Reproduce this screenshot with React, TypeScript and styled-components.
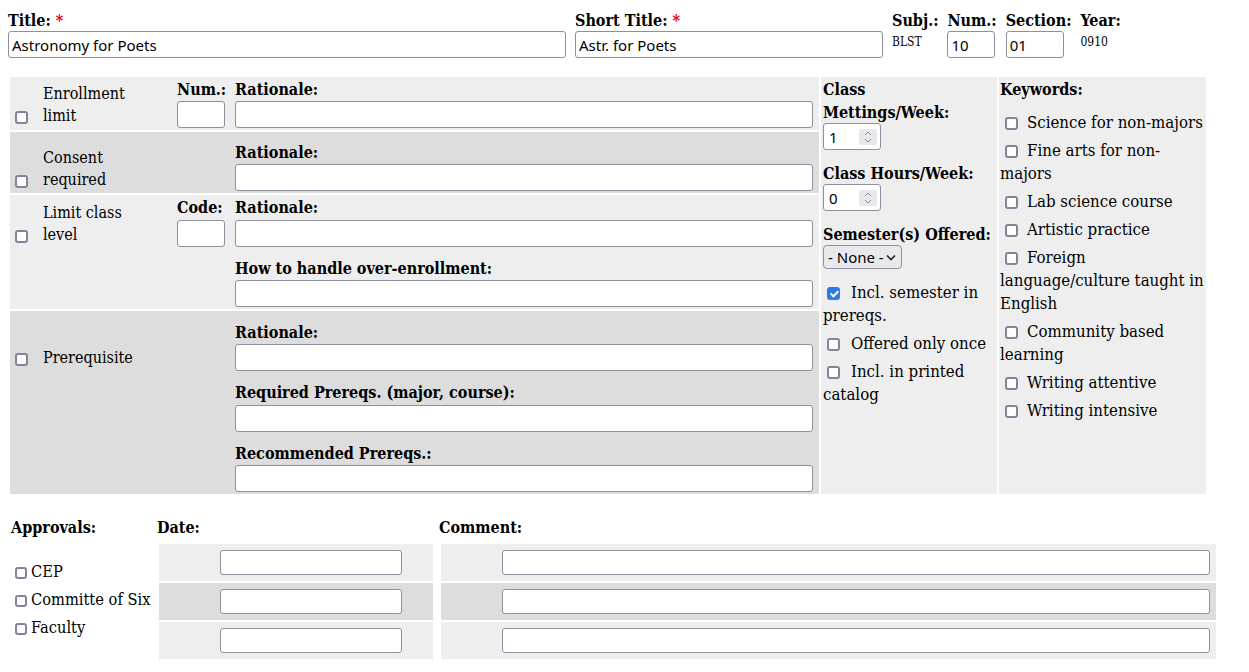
import React from "react";
import styled, { createGlobalStyle } from "styled-components";

const Global = createGlobalStyle`
  html, body { background: #fff; }
  body {
    margin: 8px;
    font-family: "DejaVu Serif Condensed", "DejaVu Serif", serif;
    font-stretch: condensed;
    font-size: 16px;
    line-height: 23px;
    color: #000;
  }
  * { box-sizing: border-box; }
`;

/* ---------- shared controls ---------- */

const Check = styled.input.attrs({ type: "checkbox" })<{ $ml?: number; $mr?: number; $size?: number }>`
  appearance: none;
  -webkit-appearance: none;
  flex: none;
  width: ${(p) => p.$size ?? 13}px;
  height: ${(p) => p.$size ?? 13}px;
  margin: 0 ${(p) => p.$mr ?? 3}px 0 ${(p) => p.$ml ?? 4}px;
  border: 2px solid #85839a;
  border-radius: 3px;
  background: #fff;
  vertical-align: -2px;
  position: relative;
  &:checked {
    background: #2f7be6;
    border-color: #2f7be6;
  }
  &:checked::after {
    content: "";
    position: absolute;
    left: 2.5px;
    top: 0px;
    width: 3px;
    height: 6px;
    border: solid #fff;
    border-width: 0 2px 2px 0;
    transform: rotate(45deg);
  }
`;

const TextInput = styled.input.attrs({ type: "text" })<{ $w?: number; $h?: number }>`
  display: block;
  width: ${(p) => (p.$w ? `${p.$w}px` : "calc(100% - 6px)")};
  height: ${(p) => p.$h ?? 27}px;
  margin: 0;
  padding: 0 3px;
  border: 1px solid #8f8f9d;
  border-radius: 3px;
  background: #fff;
  font: 15px "Noto Sans", sans-serif;
  font-stretch: normal;
  color: #000;
  outline: none;
`;

const BoldLabel = styled.div`
  font-weight: bold;
  line-height: 23px;
  padding-top: 1px;
  margin-bottom: -1px;
  white-space: nowrap;
`;

const Req = styled.span`
  color: #e60000;
`;

/* ---------- top bar ---------- */

const TopBar = styled.div`
  display: flex;
  gap: 9px;
  align-items: flex-start;
`;

const TopField = styled.div`
  display: flex;
  flex-direction: column;
`;

const SmallValue = styled.div`
  margin-top: 4px;
  font-size: 12px;
  line-height: 14px;
`;

/* ---------- main grid ---------- */

const Main = styled.div`
  display: flex;
  gap: 2px;
  margin: 19px 0 0 2px;
  width: 1196px;
`;

const LeftBlock = styled.div`
  width: 809px;
  display: flex;
  flex-direction: column;
  gap: 2px;
`;

const FieldRow = styled.div<{ $h: number; $dark?: boolean }>`
  display: grid;
  grid-template-columns: 167px 1fr;
  height: ${(p) => p.$h}px;
  background: ${(p) => (p.$dark ? "#dddddd" : "#eeeeee")};
`;

const LabelCell = styled.div<{ $pt: number }>`
  align-self: start;
  display: flex;
  align-items: flex-end;
  padding: ${(p) => p.$pt}px 0 0 5px;
  & > input {
    margin: 0 15px 3px 0;
  }
`;

const RowLabel = styled.span`
  width: 100px;
  font-size: 16px;
  line-height: 22px;
`;

const Fields = styled.div`
  align-self: end;
  display: flex;
  flex-direction: column;
  gap: 11px;
  padding-bottom: 2px;
`;

const FieldGroup = styled.div`
  display: grid;
  grid-template-columns: 58px 1fr;
`;

const FieldBox = styled.div<{ $col: number }>`
  grid-column: ${(p) => p.$col};
  display: flex;
  flex-direction: column;
`;

const FieldLabel = styled.div`
  font-weight: bold;
  line-height: 22.5px;
  white-space: nowrap;
`;

const SideCol = styled.div<{ $w: number; $px: number }>`
  width: ${(p) => p.$w}px;
  background: #eeeeee;
  padding: 0 ${(p) => p.$px}px;
  display: flex;
  flex-direction: column;
  align-items: flex-start;
`;

const ColHeading = styled.div<{ $mt?: number }>`
  font-weight: bold;
  line-height: 23px;
  margin-top: ${(p) => p.$mt ?? 0}px;
  padding-top: 1px;
  margin-bottom: -1px;
`;

const NumBox = styled.div`
  display: flex;
  align-items: center;
  width: 58px;
  height: 27px;
  border: 1px solid #8f8f9d;
  border-radius: 3px;
  background: #fff;
  padding: 0 3px 0 5px;
`;

const NumField = styled.input.attrs({ type: "number" })`
  flex: 1;
  min-width: 0;
  border: none;
  outline: none;
  background: transparent;
  padding: 0;
  margin: 0;
  font: 15px "Noto Sans", sans-serif;
  font-stretch: normal;
  color: #000;
  -moz-appearance: textfield;
  &::-webkit-inner-spin-button,
  &::-webkit-outer-spin-button {
    -webkit-appearance: none;
    margin: 0;
  }
`;

const Spinner = styled.span`
  flex: none;
  display: flex;
  width: 18px;
  height: 16px;
  background: #e9e9ed;
  border-radius: 2px;
`;

const SelectBox = styled.div`
  display: flex;
  align-items: center;
  width: 79px;
  height: 24px;
  border: 1px solid #8f8f9d;
  border-radius: 4px;
  background: #e9e9ed;
  padding: 0 5px 0 4px;
`;

const Select = styled.select`
  appearance: none;
  -webkit-appearance: none;
  flex: 1;
  min-width: 0;
  border: none;
  outline: none;
  background: transparent;
  padding: 0;
  margin: 0;
  font: 15px "Noto Sans", sans-serif;
  font-stretch: normal;
  color: #000;
`;

const OptItem = styled.div<{ $mt: number }>`
  margin-top: ${(p) => p.$mt}px;
  font-size: 16.7px;
  line-height: 23px;
  padding-top: 1px;
  margin-bottom: -1px;
`;

/* ---------- approvals ---------- */

const Approvals = styled.div`
  display: grid;
  grid-template-columns: 146px 282px 780px;
  grid-template-rows: 23px auto;
  row-gap: 6px;
  margin: 21px 0 0 2px;
`;

const HeadCell = styled.div`
  padding-left: 1px;
  font-weight: bold;
  line-height: 23px;
  padding-top: 1px;
`;

const ApprovalList = styled.div`
  padding: 16px 0 0 1px;
  display: flex;
  flex-direction: column;
  gap: 5px;
`;

const ApprovalItem = styled.div`
  font-size: 16.3px;
  line-height: 23px;
  white-space: nowrap;
`;

const Stack = styled.div<{ $pl: number; $pr: number }>`
  display: flex;
  flex-direction: column;
  gap: 2px;
  padding: 0 ${(p) => p.$pr}px 0 ${(p) => p.$pl}px;
`;

const StackCell = styled.div<{ $dark?: boolean }>`
  height: 37px;
  display: flex;
  align-items: center;
  padding-left: 61px;
  background: ${(p) => (p.$dark ? "#dddddd" : "#eeeeee")};
`;

/* ---------- icons ---------- */

const SpinIcon = () => (
  <svg width="18" height="16" viewBox="0 0 18 16">
    <polyline points="6,6 9,3 12,6" fill="none" stroke="#8a8a95" strokeWidth="1" />
    <polyline points="6,10 9,13 12,10" fill="none" stroke="#8a8a95" strokeWidth="1" />
  </svg>
);

const ChevronDown = () => (
  <svg width="10" height="7" viewBox="0 0 10 7">
    <polyline points="1,1.5 5,5.5 9,1.5" fill="none" stroke="#222" strokeWidth="1.6" />
  </svg>
);

/* ---------- data ---------- */

type Row = {
  label: string;
  h: number;
  dark?: boolean;
  pt: number;
  small?: string;
  fields: string[];
};

const rows: Row[] = [
  { label: "Enrollment limit", h: 53, pt: 6, small: "Num.:", fields: ["Rationale:"] },
  { label: "Consent required", h: 61, dark: true, pt: 15, fields: ["Rationale:"] },
  {
    label: "Limit class level",
    h: 114,
    pt: 7,
    small: "Code:",
    fields: ["Rationale:", "How to handle over-enrollment:"],
  },
  {
    label: "Prerequisite",
    h: 183,
    dark: true,
    pt: 36,
    fields: ["Rationale:", "Required Prereqs. (major, course):", "Recommended Prereqs.:"],
  },
];

const keywords = [
  "Science for non-majors",
  "Fine arts for non-majors",
  "Lab science course",
  "Artistic practice",
  "Foreign language/culture taught in English",
  "Community based learning",
  "Writing attentive",
  "Writing intensive",
];

const approvals = ["CEP", "Committe of Six", "Faculty"];

export default function App() {
  return (
    <>
      <Global />
      <TopBar>
        <TopField>
          <BoldLabel>
            Title: <Req>*</Req>
          </BoldLabel>
          <TextInput $w={558} defaultValue="Astronomy for Poets" />
        </TopField>
        <TopField>
          <BoldLabel>
            Short Title: <Req>*</Req>
          </BoldLabel>
          <TextInput $w={308} defaultValue="Astr. for Poets" />
        </TopField>
        <TopField>
          <BoldLabel>Subj.:</BoldLabel>
          <SmallValue>BLST</SmallValue>
        </TopField>
        <TopField>
          <BoldLabel>Num.:</BoldLabel>
          <TextInput $w={48} defaultValue="10" />
        </TopField>
        <TopField>
          <BoldLabel>Section:</BoldLabel>
          <TextInput $w={58} defaultValue="01" />
        </TopField>
        <TopField>
          <BoldLabel>Year:</BoldLabel>
          <SmallValue>0910</SmallValue>
        </TopField>
      </TopBar>

      <Main>
        <LeftBlock>
          {rows.map((r) => (
            <FieldRow key={r.label} $h={r.h} $dark={r.dark}>
              <LabelCell $pt={r.pt}>
                <Check />
                <RowLabel>{r.label}</RowLabel>
              </LabelCell>
              <Fields>
                {r.fields.map((f, i) => (
                  <FieldGroup key={f}>
                    {i === 0 && r.small && (
                      <FieldBox $col={1}>
                        <FieldLabel>{r.small}</FieldLabel>
                        <TextInput $w={48} />
                      </FieldBox>
                    )}
                    <FieldBox $col={2}>
                      <FieldLabel>{f}</FieldLabel>
                      <TextInput />
                    </FieldBox>
                  </FieldGroup>
                ))}
              </Fields>
            </FieldRow>
          ))}
        </LeftBlock>

        <SideCol $w={176} $px={2}>
          <ColHeading>Class Mettings/Week:</ColHeading>
          <NumBox>
            <NumField defaultValue={1} />
            <Spinner>
              <SpinIcon />
            </Spinner>
          </NumBox>
          <ColHeading $mt={11}>Class Hours/Week:</ColHeading>
          <NumBox>
            <NumField defaultValue={0} />
            <Spinner>
              <SpinIcon />
            </Spinner>
          </NumBox>
          <ColHeading $mt={11}>Semester(s) Offered:</ColHeading>
          <SelectBox>
            <Select defaultValue="none">
              <option value="none">- None -</option>
              <option value="fall">Fall</option>
              <option value="spring">Spring</option>
            </Select>
            <ChevronDown />
          </SelectBox>
          <OptItem $mt={11}>
            <Check $ml={4} $mr={11} defaultChecked />
            Incl. semester in prereqs.
          </OptItem>
          <OptItem $mt={5}>
            <Check $ml={4} $mr={11} />
            Offered only once
          </OptItem>
          <OptItem $mt={5}>
            <Check $ml={4} $mr={11} />
            Incl. in printed catalog
          </OptItem>
        </SideCol>

        <SideCol $w={207} $px={1}>
          <ColHeading>Keywords:</ColHeading>
          {keywords.map((k, i) => (
            <OptItem key={k} $mt={i === 0 ? 10 : 5}>
              <Check $ml={5} $mr={9} />
              {k}
            </OptItem>
          ))}
        </SideCol>
      </Main>

      <Approvals>
        <HeadCell>Approvals:</HeadCell>
        <HeadCell>Date:</HeadCell>
        <HeadCell>Comment:</HeadCell>
        <ApprovalList>
          {approvals.map((a) => (
            <ApprovalItem key={a}>
              <Check $ml={4} $mr={4} $size={12} />
              {a}
            </ApprovalItem>
          ))}
        </ApprovalList>
        <Stack $pl={3} $pr={5}>
          {approvals.map((a, i) => (
            <StackCell key={a} $dark={i === 1}>
              <TextInput $h={25} $w={182} />
            </StackCell>
          ))}
        </Stack>
        <Stack $pl={3} $pr={2}>
          {approvals.map((a, i) => (
            <StackCell key={a} $dark={i === 1}>
              <TextInput $h={25} $w={708} />
            </StackCell>
          ))}
        </Stack>
      </Approvals>
    </>
  );
}
